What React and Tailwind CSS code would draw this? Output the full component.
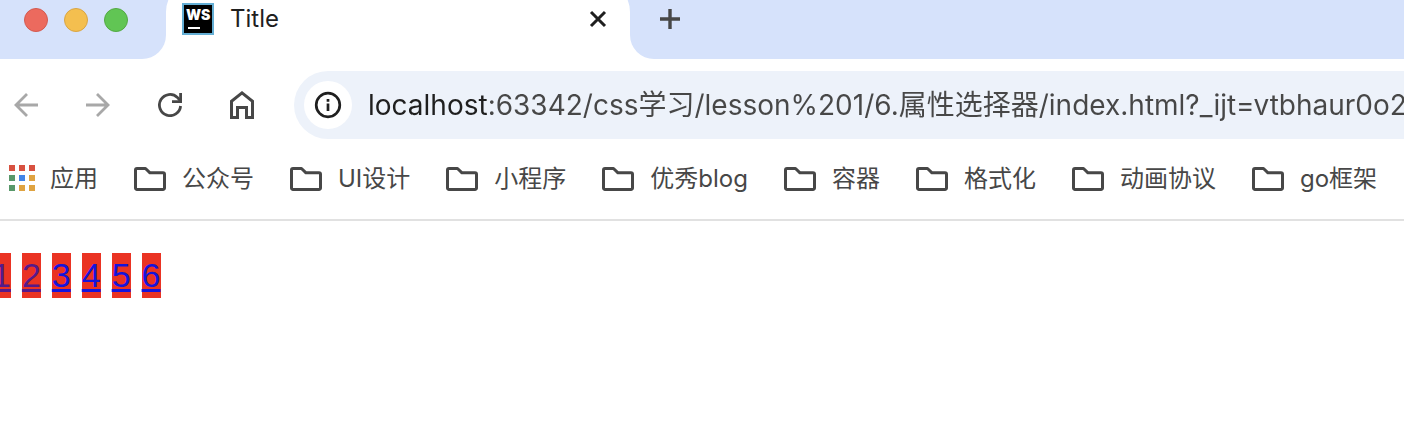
import { useState } from "react";

const folders = ["公众号", "UI设计", "小程序", "优秀blog", "容器", "格式化", "动画协议", "go框架"];

const links = [
  { label: "1", visited: true },
  { label: "2", visited: true },
  { label: "3", visited: false },
  { label: "4", visited: false },
  { label: "5", visited: false },
  { label: "6", visited: false },
];

const IconButton = ({ label, className, children }) => (
  <button type="button" aria-label={label} className={`flex size-12 shrink-0 items-center justify-center rounded-full ${className}`}>
    {children}
  </button>
);

const FolderIcon = () => (
  <svg viewBox="0 0 32 32" className="size-8 shrink-0" fill="none" stroke="currentColor" strokeWidth="3" strokeLinejoin="round">
    <path d="M3 5.5h8.5l4.5 4.3h13a1.5 1.5 0 0 1 1.5 1.5v13.7a1.5 1.5 0 0 1-1.5 1.5H3a1.5 1.5 0 0 1-1.5-1.5V7A1.5 1.5 0 0 1 3 5.5z" />
  </svg>
);

const AppsIcon = () => (
  <svg viewBox="0 0 32 32" className="size-8 shrink-0 overflow-visible">
    <path fill="#d85140" d="M7 2h6v6H7zM17 2h6v6h-6zM27 2h6v6h-6z" />
    <path fill="#58986a" d="M7 12h6v6H7zM7 22h6v6H7z" />
    <path fill="#4285e8" d="M17 12h6v6h-6z" />
    <path fill="#dfa341" d="M27 12h6v6h-6zM17 22h6v6h-6zM27 22h6v6h-6z" />
  </svg>
);

const TabStrip = () => (
  <header className="flex h-[59px] overflow-hidden">
    <div className="flex w-[166px] shrink-0 gap-4 rounded-br-[24px] bg-[#d6e2fb] pt-2 pl-6">
      <button type="button" aria-label="Close window" className="size-6 rounded-full border border-[#d35a50] bg-[#ec6a5e]" />
      <button type="button" aria-label="Minimize window" className="size-6 rounded-full border border-[#d9a544] bg-[#f4bf4f]" />
      <button type="button" aria-label="Zoom window" className="size-6 rounded-full border border-[#54a943] bg-[#61c554]" />
    </div>

    <div className="w-[464px] shrink-0 bg-[linear-gradient(#d6e2fb_50%,#fff_50%)]">
      <div className="-mt-5 flex h-[79px] items-center rounded-t-[32px] bg-white pr-[22px] pb-px pl-4">
        <span className="flex size-8 flex-col justify-between border-2 border-[#64aed4] bg-black px-0.5 pt-1 pb-1">
          <span className="text-center text-[14px] leading-3 font-black text-white">WS</span>
          <span className="ml-0.5 h-0.5 w-3 bg-white" />
        </span>
        <span className="ml-4 flex-1 text-[24px] leading-8 text-[#1f1f1f]">Title</span>
        <button type="button" aria-label="Close tab" className="flex size-5 items-center justify-center text-[#1f1f1f]">
          <svg viewBox="0 0 20 20" className="size-5" fill="none" stroke="currentColor" strokeWidth="3">
            <path d="M3 3l14 14M17 3L3 17" />
          </svg>
        </button>
      </div>
    </div>

    <div className="flex-1 rounded-bl-[24px] bg-[#d6e2fb] pt-[9px] pl-[30px]">
      <button type="button" aria-label="New tab" className="block text-[#474747]">
        <svg viewBox="0 0 20 20" className="size-5" fill="none" stroke="currentColor" strokeWidth="3.4">
          <path d="M10 0v20M0 10h20" />
        </svg>
      </button>
    </div>
  </header>
);

const Toolbar = () => {
  const [url, setUrl] = useState("localhost:63342/css学习/lesson%201/6.属性选择器/index.html?_ijt=vtbhaur0o2");

  return (
    <div className="flex items-center gap-6 pt-3 pl-0.5 text-[#474747]">
      <IconButton label="Back" className="text-[#a8a8a8]">
        <svg viewBox="0 0 24 24" className="size-6" fill="none" stroke="currentColor" strokeWidth="2.8">
          <path d="M24 12H2M13 1L2 12l11 11" />
        </svg>
      </IconButton>
      <IconButton label="Forward" className="text-[#a8a8a8]">
        <svg viewBox="0 0 24 24" className="size-6" fill="none" stroke="currentColor" strokeWidth="2.8">
          <path d="M0 12h22M11 1l11 11-11 11" />
        </svg>
      </IconButton>
      <IconButton label="Reload" className="">
        <svg viewBox="0 0 24 24" className="size-6" fill="none" stroke="currentColor" strokeWidth="2.8">
          <path d="M22.6 13A10.6 10.6 0 1 1 19.4 4.4L22.6 8" />
          <path d="M22.6 0v8.6H14" />
        </svg>
      </IconButton>
      <IconButton label="Home" className="">
        <svg viewBox="0 0 24 28" className="h-7 w-6" fill="none" stroke="currentColor" strokeWidth="3">
          <path d="M1.5 26.4V10.2L12 1.9l10.5 8.3v16.2h-6v-10h-9v10z" />
        </svg>
      </IconButton>

      <div className="ml-1 flex h-[68px] min-w-0 flex-1 items-center gap-4 rounded-l-full bg-[#edf2fa] pl-2.5">
        <IconButton label="View site information" className="bg-white text-[#1f1f1f]">
          <svg viewBox="0 0 28 28" className="size-7" fill="none" stroke="currentColor" strokeWidth="2.7">
            <circle cx="14" cy="14" r="11.8" />
            <path d="M14 12.5V20M14 8v2.7" />
          </svg>
        </IconButton>
        <input
          type="text"
          aria-label="Address"
          value={url}
          onChange={(e) => setUrl(e.target.value)}
          className="h-12 min-w-0 flex-1 bg-[linear-gradient(90deg,#1f1f1f_120px,#474747_120px)] bg-clip-text pb-1 text-[28px] text-transparent outline-none"
        />
      </div>
    </div>
  );
};

const BookmarksBar = () => (
  <nav className="flex gap-9 overflow-hidden border-b-2 border-[#e1e1e1] py-6 pl-0.5 text-[24px] leading-8 whitespace-nowrap text-[#474747]">
    <a href="#apps" className="flex shrink-0 items-center gap-4">
      <AppsIcon />
      应用
    </a>
    {folders.map((name) => (
      <button key={name} type="button" className="flex shrink-0 items-center gap-4">
        <FolderIcon />
        {name}
      </button>
    ))}
  </nav>
);

const App = () => {
  return (
    <div className="overflow-hidden bg-white font-['Inter','Noto_Sans_CJK_SC',sans-serif]">
      <TabStrip />
      <Toolbar />
      <BookmarksBar />
      <main className="-ml-2 flex gap-[11px] pt-8 font-['Liberation_Sans',sans-serif] text-[34px] leading-[45px]">
        {links.map(({ label, visited }) => (
          <a
            key={label}
            href={`#${label}`}
            className={`bg-[#ea3323] underline decoration-3 underline-offset-2 ${visited ? "text-[#551a8b]" : "text-[#1414dc]"}`}
          >
            {label}
          </a>
        ))}
      </main>
    </div>
  );
};

export default App;
